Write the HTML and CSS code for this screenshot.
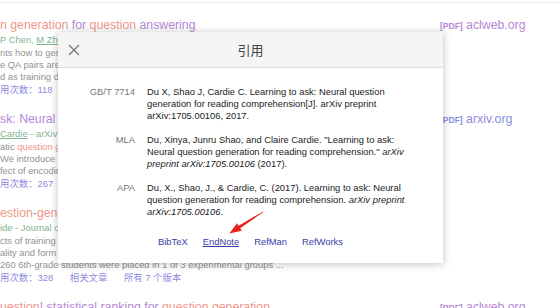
FILE: index.html
```html
<!DOCTYPE html>
<html lang="zh-CN">
<head>
    <meta charset="UTF-8">
    <title>引用</title>
    <link rel="stylesheet" href="styles.css">
</head>
<body>
    <div class="topbar"></div>

    <!-- Resultados por trás do diálogo -->
    <div class="results">
        <div class="result">
            <div class="main">
                <div class="title"><span class="hl">n generation</span> for <span class="hl">question</span> answering</div>
                <div class="authors">P Chen, <u>M Zhou</u>, L Wang - Proceedings of the 2018 Conference, 2018</div>
                <div class="snippet">nts how to generate questions from text using neural models and rules</div>
                <div class="snippet">e QA pairs are then filtered and used to train the answering system</div>
                <div class="snippet">d as training data for the question answering model in our experiments</div>
                <div class="cited">用次数：118</div>
            </div>
            <div class="side"><span class="pdf">[PDF]</span> aclweb.org</div>
        </div>
        <div class="result">
            <div class="main">
                <div class="title">sk: Neural question generation for reading comprehension</div>
                <div class="authors"><u>Cardie</u> - arXiv preprint arXiv:1705.00106, 2017</div>
                <div class="snippet">atic <span class="hl">question g</span>eneration aims to generate questions from a text passage</div>
                <div class="snippet">We introduce an attention-based sequence learning model for the task</div>
                <div class="snippet">fect of encoding sentence- vs. paragraph-level information</div>
                <div class="cited">用次数：267</div>
            </div>
            <div class="side blue"><span class="pdf">[PDF]</span> arxiv.org</div>
        </div>
        <div class="result">
            <div class="main">
                <div class="title"><span class="hl">estion</span>-<span class="hl">generation</span> training on reading</div>
                <div class="authors">ide - Journal of Educational Psychology, 1982</div>
                <div class="snippet">cts of training in question generation on reading comprehension</div>
                <div class="snippet">ality and form of questions generated by the students were examined</div>
                <div class="snippet">260 6th-grade students were placed in 1 of 3 experimental groups ...</div>
                <div class="cited">用次数：328 <span class="gap">相关文章</span> <span class="gap">所有 7 个版本</span></div>
            </div>
            <div class="side"></div>
        </div>
        <div class="result">
            <div class="main">
                <div class="title"><span class="hl">uestion</span>! statistical ranking for <span class="hl">question generation</span></div>
            </div>
            <div class="side"><span class="pdf">[PDF]</span> aclweb.org</div>
        </div>
    </div>

    <!-- Diálogo de citação -->
    <div class="modal">
        <div class="modal-head">
            <svg class="close" width="12" height="12" viewBox="0 0 12 12">
                <path d="M1 1 L11 11 M11 1 L1 11" stroke="#777" stroke-width="1.3" fill="none"/>
            </svg>
            <span class="modal-title">引用</span>
        </div>
        <div class="modal-body">
            <div class="cite-row">
                <div class="cite-label">GB/T 7714</div>
                <div class="cite-text">Du X, Shao J, Cardie C. Learning to ask: Neural question generation for reading comprehension[J]. arXiv preprint arXiv:1705.00106, 2017.</div>
            </div>
            <div class="cite-row">
                <div class="cite-label">MLA</div>
                <div class="cite-text">Du, Xinya, Junru Shao, and Claire Cardie. "Learning to ask: Neural question generation for reading comprehension." <i>arXiv preprint arXiv:1705.00106</i> (2017).</div>
            </div>
            <div class="cite-row">
                <div class="cite-label">APA</div>
                <div class="cite-text">Du, X., Shao, J., &amp; Cardie, C. (2017). Learning to ask: Neural question generation for reading comprehension. <i>arXiv preprint arXiv:1705.00106</i>.</div>
            </div>
            <div class="links">
                <a href="#">BibTeX</a>
                <a href="#" class="active">EndNote</a>
                <a href="#">RefMan</a>
                <a href="#">RefWorks</a>
            </div>
        </div>
        <svg class="arrow" width="50" height="35" viewBox="0 0 50 35">
            <polygon points="43.1,6.4 43.5,7.0 20.2,23.2 21.8,25.8 9.3,28.5 17.0,18.2 18.6,20.8" fill="#e8231f"/>
        </svg>
    </div>
</body>
</html>
```

FILE: styles.css
```css
html, body {
    height: 308px;
    overflow: hidden;
}
body {
    margin: 0;
    font-family: "Liberation Sans", Arial, "Noto Sans CJK SC", sans-serif;
    background-color: #fff;
}
.topbar {
    height: 2px;
    border-bottom: 1px solid #ececec;
}
.results {
    padding-top: 14px;
}
.result {
    display: grid;
    grid-template-columns: 440px 1fr;
    margin-bottom: 14px;
}
.main {
    overflow: hidden;
    white-space: nowrap;
}
.title {
    font-size: 12.3px;
    line-height: 16px;
    color: #b587d6;
}
.hl {
    color: #f0968a;
}
.authors {
    font-size: 9.4px;
    line-height: 14px;
    color: #80b58f;
}
.snippet {
    font-size: 9.4px;
    line-height: 12px;
    color: #929292;
}
.snippet .hl {
    color: #f0968a;
}
.cited {
    font-size: 9.4px;
    line-height: 14px;
    color: #8f8ade;
}
.gap {
    margin-left: 14px;
}
.side {
    font-size: 12.3px;
    line-height: 16px;
    color: #b587d6;
    white-space: nowrap;
}
.side.blue {
    color: #8a8ce0;
}
.pdf {
    font-size: 8.5px;
    font-weight: bold;
}
.modal {
    position: absolute;
    left: 58px;
    top: 32px;
    width: 385px;
    height: 231px;
    background-color: #fff;
    box-shadow: 0 1px 8px rgba(0, 0, 0, 0.25);
}
.modal-head {
    position: relative;
    height: 35px;
    background-color: #f5f5f5;
    border-bottom: 1px solid #e0e0e0;
    display: flex;
    align-items: center;
    justify-content: center;
}
.close {
    position: absolute;
    left: 10px;
    top: 12px;
}
.modal-title {
    font-family: "Noto Sans CJK SC", sans-serif;
    font-size: 13px;
    color: #444;
}
.modal-body {
    padding-top: 18px;
}
.cite-row {
    display: flex;
    margin-bottom: 12px;
    font-size: 9.4px;
    line-height: 12px;
}
.cite-label {
    width: 77px;
    text-align: right;
    padding-right: 12px;
    color: #777;
}
.cite-text {
    width: 272px;
    color: #222;
}
.links {
    display: flex;
    justify-content: center;
    gap: 15px;
    margin-top: 18px;
    font-size: 9.4px;
    line-height: 12px;
}
.links a {
    color: #3a3aa8;
    text-decoration: none;
}
.links a.active {
    text-decoration: underline;
}
.arrow {
    position: absolute;
    left: 162px;
    top: 173px;
}
```
